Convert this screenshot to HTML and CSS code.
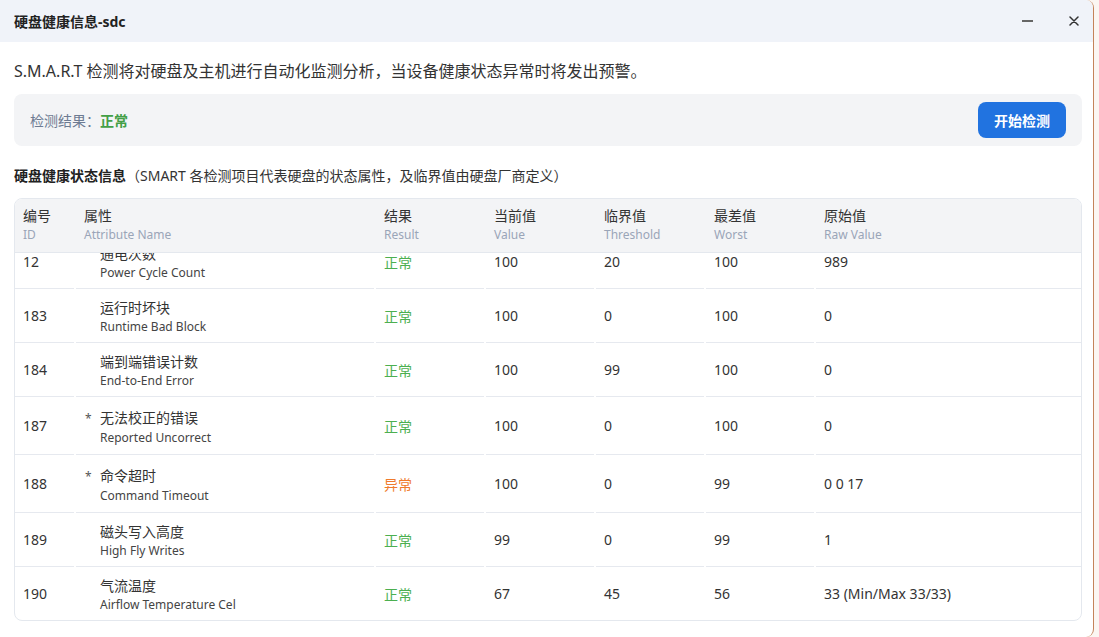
FILE: index.html
```html
<!DOCTYPE html>
<html lang="zh-CN">
<head>
<meta charset="utf-8">
<title>硬盘健康信息-sdc</title>
<link rel="stylesheet" href="styles.css">
</head>
<body>
<div class="window">
  <div class="titlebar">
    <span class="title">硬盘健康信息-sdc</span>
    <div class="controls">
      <span class="min"></span>
      <svg class="close" width="10" height="10" viewBox="0 0 10 10"><path d="M1 1 L9 9 M9 1 L1 9" stroke="#333" stroke-width="1.5" stroke-linecap="round"/></svg>
    </div>
  </div>
  <div class="content">
    <p class="desc">S.M.A.R.T 检测将对硬盘及主机进行自动化监测分析，当设备健康状态异常时将发出预警。</p>
    <div class="result-box">
      <div class="result">检测结果：<span class="ok-bold">正常</span></div>
      <button class="start">开始检测</button>
    </div>
    <div class="section-title"><b>硬盘健康状态信息</b>（SMART 各检测项目代表硬盘的状态属性，及临界值由硬盘厂商定义）</div>
    <div class="table">
      <div class="row thead">
        <div class="hcell"><span class="zh">编号</span><span class="en">ID</span></div>
        <div class="hcell"><span class="zh">属性</span><span class="en">Attribute Name</span></div>
        <div class="hcell"><span class="zh">结果</span><span class="en">Result</span></div>
        <div class="hcell"><span class="zh">当前值</span><span class="en">Value</span></div>
        <div class="hcell"><span class="zh">临界值</span><span class="en">Threshold</span></div>
        <div class="hcell"><span class="zh">最差值</span><span class="en">Worst</span></div>
        <div class="hcell"><span class="zh">原始值</span><span class="en">Raw Value</span></div>
      </div>
      <div class="tbody">
        <div class="tbody-inner">
          <div class="row tr">
            <div class="cell">12</div>
            <div class="cell"><div class="attr"><span class="star"></span><div><span class="azh">通电次数</span><span class="aen">Power Cycle Count</span></div></div></div>
            <div class="cell ok">正常</div>
            <div class="cell">100</div>
            <div class="cell">20</div>
            <div class="cell">100</div>
            <div class="cell">989</div>
          </div>
          <div class="row tr">
            <div class="cell">183</div>
            <div class="cell"><div class="attr"><span class="star"></span><div><span class="azh">运行时坏块</span><span class="aen">Runtime Bad Block</span></div></div></div>
            <div class="cell ok">正常</div>
            <div class="cell">100</div>
            <div class="cell">0</div>
            <div class="cell">100</div>
            <div class="cell">0</div>
          </div>
          <div class="row tr">
            <div class="cell">184</div>
            <div class="cell"><div class="attr"><span class="star"></span><div><span class="azh">端到端错误计数</span><span class="aen">End-to-End Error</span></div></div></div>
            <div class="cell ok">正常</div>
            <div class="cell">100</div>
            <div class="cell">99</div>
            <div class="cell">100</div>
            <div class="cell">0</div>
          </div>
          <div class="row tr tall">
            <div class="cell">187</div>
            <div class="cell"><div class="attr"><span class="star">*</span><div><span class="azh">无法校正的错误</span><span class="aen">Reported Uncorrect</span></div></div></div>
            <div class="cell ok">正常</div>
            <div class="cell">100</div>
            <div class="cell">0</div>
            <div class="cell">100</div>
            <div class="cell">0</div>
          </div>
          <div class="row tr tall">
            <div class="cell">188</div>
            <div class="cell"><div class="attr"><span class="star">*</span><div><span class="azh">命令超时</span><span class="aen">Command Timeout</span></div></div></div>
            <div class="cell warn">异常</div>
            <div class="cell">100</div>
            <div class="cell">0</div>
            <div class="cell">99</div>
            <div class="cell">0 0 17</div>
          </div>
          <div class="row tr">
            <div class="cell">189</div>
            <div class="cell"><div class="attr"><span class="star"></span><div><span class="azh">磁头写入高度</span><span class="aen">High Fly Writes</span></div></div></div>
            <div class="cell ok">正常</div>
            <div class="cell">99</div>
            <div class="cell">0</div>
            <div class="cell">99</div>
            <div class="cell">1</div>
          </div>
          <div class="row tr">
            <div class="cell">190</div>
            <div class="cell"><div class="attr"><span class="star"></span><div><span class="azh">气流温度</span><span class="aen">Airflow Temperature Cel</span></div></div></div>
            <div class="cell ok">正常</div>
            <div class="cell">67</div>
            <div class="cell">45</div>
            <div class="cell">56</div>
            <div class="cell">33 (Min/Max 33/33)</div>
          </div>
        </div>
      </div>
    </div>
  </div>
</div>
</body>
</html>
```

FILE: styles.css
```css
* {
  box-sizing: border-box;
  margin: 0;
  padding: 0;
}

html, body {
  width: 1099px;
  height: 637px;
  overflow: hidden;
}

body {
  background: #fbf6f2;
  font-family: "Noto Sans", "Noto Sans CJK SC", sans-serif;
  color: #333;
}

.window {
  width: 1094px;
  height: 637px;
  background: #fff;
  border-right: 1px solid #c4835a;
  border-radius: 0 8px 8px 0;
  overflow: hidden;
  display: flex;
  flex-direction: column;
}

.titlebar {
  height: 42px;
  flex: none;
  background: #f0f3f9;
  display: flex;
  align-items: center;
  justify-content: space-between;
  padding: 0 14px 0 14px;
}

.title {
  font-size: 14px;
  font-weight: 700;
  color: #222;
}

.controls {
  display: flex;
  align-items: center;
  gap: 36px;
}

.min {
  display: block;
  width: 11px;
  height: 2px;
  background: #666;
}

.close {
  display: block;
}

.content {
  padding: 17px 11px 0 14px;
}

.desc {
  font-size: 16px;
  line-height: 24px;
  color: #333;
}

.result-box {
  margin-top: 11px;
  height: 52px;
  background: #f3f4f6;
  border-radius: 8px;
  display: flex;
  align-items: center;
  justify-content: space-between;
  padding: 0 16px;
}

.result {
  font-size: 14px;
  color: #6d7b92;
}

.ok-bold {
  color: #43a047;
  font-weight: 700;
}

.start {
  width: 88px;
  height: 36px;
  border: none;
  border-radius: 8px;
  background: #2173e0;
  color: #fff;
  font-family: "Noto Sans", "Noto Sans CJK SC", sans-serif;
  font-weight: 700;
  font-size: 14px;
}

.section-title {
  margin-top: 20px;
  font-size: 14px;
  line-height: 20px;
  color: #333;
}

.section-title b {
  font-weight: 700;
  color: #222;
}

.table {
  margin-top: 12px;
  height: 423px;
  border: 1px solid #e4e8ee;
  border-radius: 8px;
  overflow: hidden;
  display: flex;
  flex-direction: column;
}

.row {
  display: grid;
  grid-template-columns: 59px 298px 108px 108px 108px 108px 1fr;
  column-gap: 2px;
}

.thead {
  flex: none;
  background: #f3f4f6;
  border-bottom: 1px solid #e4e8ee;
  padding: 7px 0 8px;
}

.hcell {
  padding-left: 8px;
}

.zh {
  display: block;
  font-size: 14px;
  line-height: 20px;
  color: #333;
}

.en {
  display: block;
  font-size: 12px;
  line-height: 18px;
  color: #9aa5b8;
}

.tbody {
  flex: 1;
  overflow: hidden;
}

.tbody-inner {
  margin-top: -18px;
}

.cell {
  height: 54px;
  border-bottom: 1px solid #e6e9ef;
  display: flex;
  align-items: center;
  padding-left: 8px;
  font-size: 14px;
  color: #333;
}

.tall .cell {
  height: 58px;
}

.attr {
  display: flex;
  padding-top: 3px;
}

.star {
  width: 16px;
  flex: none;
  font-size: 12px;
  line-height: 20px;
  padding-top: 2px;
  padding-left: 1px;
  color: #555;
}

.azh {
  display: block;
  font-size: 14px;
  line-height: 20px;
  color: #333;
}

.tall .azh {
  line-height: 22px;
}

.aen {
  display: block;
  font-size: 12px;
  line-height: 18px;
  color: #444;
}

.ok {
  color: #4caf50;
}

.warn {
  color: #ef7b2c;
}
```
